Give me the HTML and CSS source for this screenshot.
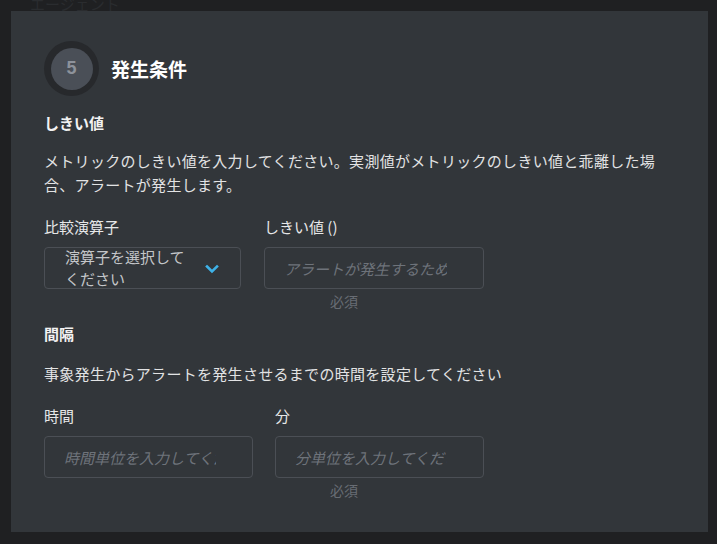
FILE: index.html
```html
<!DOCTYPE html>
<html lang="ja">
<head>
<meta charset="utf-8">
<link rel="stylesheet" href="styles.css">
</head>
<body>
<div class="ghost">エージェント</div>
<div class="panel">
  <div class="header">
    <div class="step"><div class="step-inner">5</div></div>
    <h2 class="title">発生条件</h2>
  </div>

  <h3 class="section-title">しきい値</h3>
  <p class="desc">メトリックのしきい値を入力してください。実測値がメトリックのしきい値と乖離した場合、アラートが発生します。</p>
  <div class="row row-one">
    <div class="field field-select">
      <label class="label">比較演算子</label>
      <div class="select">
        <span class="select-text">演算子を選択してください</span>
        <svg class="chevron" width="14" height="10" viewBox="0 0 14 10"><path d="M2 2.5 L7 7.5 L12 2.5" fill="none" stroke="#3eb2e8" stroke-width="2.6" stroke-linecap="square"/></svg>
      </div>
    </div>
    <div class="field field-thr">
      <label class="label">しきい値 ()</label>
      <div class="input"><span class="ph">アラートが発生するための値</span></div>
      <div class="req req-one">必須</div>
    </div>
  </div>

  <h3 class="section-title gap-top">間隔</h3>
  <p class="desc desc-two">事象発生からアラートを発生させるまでの時間を設定してください</p>
  <div class="row row-two">
    <div class="field field-h">
      <label class="label">時間</label>
      <div class="input"><span class="ph">時間単位を入力してください</span></div>
    </div>
    <div class="field field-m">
      <label class="label">分</label>
      <div class="input"><span class="ph">分単位を入力してください</span></div>
      <div class="req req-two">必須</div>
    </div>
  </div>
</div>
</body>
</html>
```

FILE: styles.css
```css
* { box-sizing: border-box; }
html, body { margin: 0; padding: 0; }
body {
  background: #1f2022;
  width: 717px;
  height: 544px;
  overflow: hidden;
  font-family: "Noto Sans CJK JP", "Noto Sans", sans-serif;
  color: #e6e7e8;
  position: relative;
}
.ghost {
  position: absolute;
  left: 30px;
  top: -5px;
  font-size: 15px;
  line-height: 18px;
  color: #2a2c2f;
}
.panel {
  position: relative;
  margin: 11px 0 0 11px;
  width: 697px;
  height: 521px;
  background: #32363a;
  padding: 30px 33px 0 33px;
}
.header {
  display: flex;
  align-items: center;
  gap: 12px;
}
.step {
  width: 55px;
  height: 55px;
  border-radius: 50%;
  background: #27292c;
  display: flex;
  align-items: center;
  justify-content: center;
}
.step-inner {
  width: 42px;
  height: 42px;
  border-radius: 50%;
  background: #4a4f57;
  color: #8d929b;
  font-family: "Liberation Sans", Arial, sans-serif;
  font-weight: bold;
  font-size: 18px;
  display: flex;
  align-items: center;
  justify-content: center;
}
.title {
  margin: 0;
  font-size: 19px;
  font-weight: bold;
  color: #ffffff;
}
.section-title {
  margin: 15px 0 0 0;
  font-size: 15px;
  font-weight: bold;
  line-height: 24px;
  color: #f2f2f2;
}
.section-title.gap-top { margin-top: 10px; }
.desc {
  margin: 14px 0 0 0;
  font-size: 15px;
  line-height: 24px;
  color: #e2e3e4;
  letter-spacing: 0.3px;
}
.desc-two { margin-top: 16px; }
.row {
  display: flex;
  margin-top: 18px;
}
.row-one { gap: 23px; }
.row-two { gap: 22px; }
.field { display: flex; flex-direction: column; }
.label {
  font-size: 15px;
  line-height: 24px;
  color: #e6e7e8;
  margin-bottom: 8px;
}
.field-select { width: 197px; }
.field-thr { width: 220px; }
.field-h, .field-m { width: 209px; }
.select, .input {
  height: 42px;
  border: 1px solid #4b4f55;
  border-radius: 4px;
  display: flex;
  align-items: center;
  overflow: hidden;
}
.select {
  padding: 0 21px 0 20px;
  justify-content: space-between;
}
.select-text {
  flex: none;
  width: 122px;
  font-size: 15px;
  line-height: 22px;
  height: 44px;
  color: #c4c6c9;
}
.chevron { flex: none; margin-top: 2px; }
.input { padding: 0 36px 0 19px; }
.ph {
  font-size: 15px;
  font-style: italic;
  color: #6e737a;
  white-space: nowrap;
  overflow: hidden;
  display: block;
  width: 100%;
}
.req {
  font-size: 14px;
  line-height: 22px;
  color: #686d74;
  margin-top: 1px;
}
.req-one { padding-left: 66px; }
.req-two { padding-left: 55px; }
```
